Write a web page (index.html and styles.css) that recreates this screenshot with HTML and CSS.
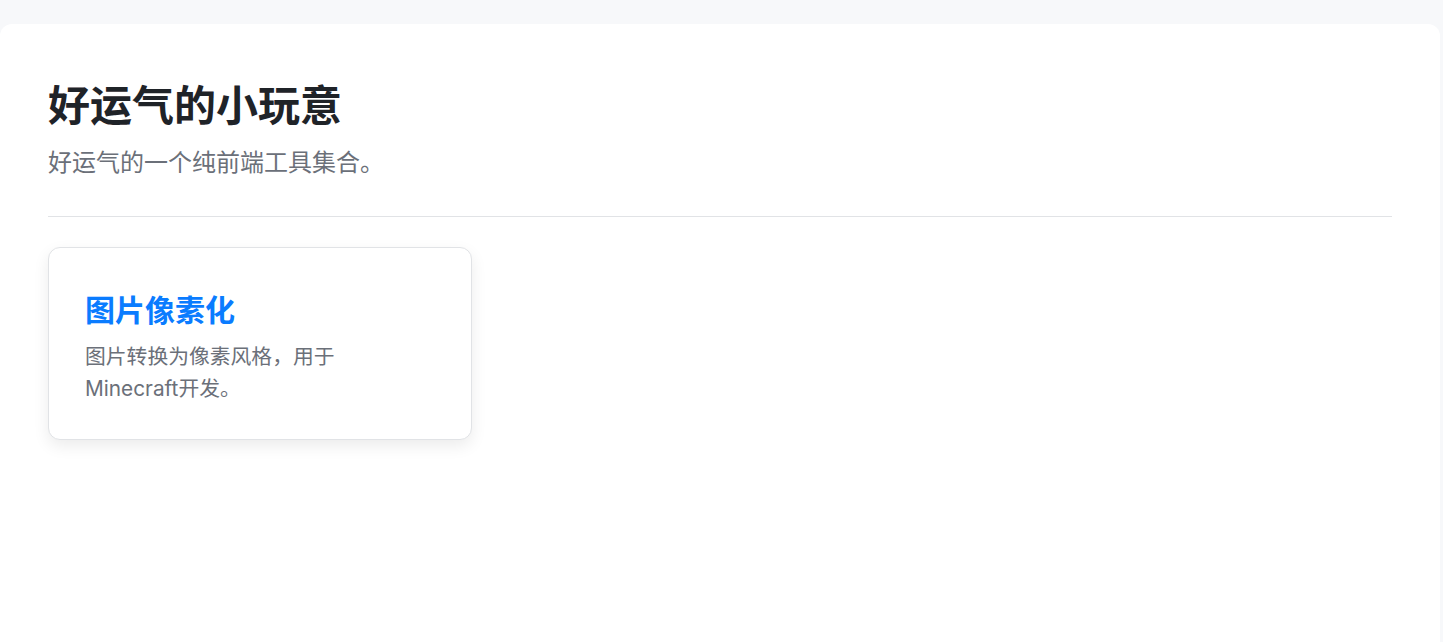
FILE: index.html
```html
<!DOCTYPE html>
<html lang="zh-CN">
<head>
<meta charset="utf-8">
<title>好运气的小玩意</title>
<link rel="stylesheet" href="styles.css">
</head>
<body>
<main class="page">
  <header class="hero">
    <h1 class="hero-title">好运气的小玩意</h1>
    <p class="hero-sub">好运气的一个纯前端工具集合。</p>
  </header>
  <section class="tools">
    <a class="tool-card" href="#">
      <h3 class="tool-title">图片像素化</h3>
      <p class="tool-desc">图片转换为像素风格，用于Minecraft开发。</p>
    </a>
  </section>
</main>
</body>
</html>
```
FILE: styles.css
```css
html, body {
  margin: 0;
  padding: 0;
}
body {
  background: #f7f8fa;
  font-family: Inter, "Noto Sans CJK SC", sans-serif;
  min-height: 642px;
}
.page {
  box-sizing: border-box;
  width: 1440px;
  min-height: 618px;
  margin-top: 24px;
  background: #ffffff;
  border-radius: 12px 12px 0 0;
  padding: 57px 48px 48px;
}
.hero {
  padding-bottom: 35px;
  border-bottom: 1px solid #e1e3e6;
}
.hero-title {
  margin: 0;
  font-size: 42px;
  line-height: 1.2;
  font-weight: 700;
  color: #1f2328;
}
.hero-sub {
  margin: 14px 0 0;
  font-size: 24px;
  line-height: 1.5;
  color: #6b7079;
}
.tools {
  display: grid;
  grid-template-columns: 424px;
  margin-top: 30px;
}
.tool-card {
  display: block;
  box-sizing: border-box;
  padding: 36px 36px 36px;
  border: 1px solid #e1e3e6;
  border-radius: 12px;
  background: #fff;
  box-shadow: 0 6px 16px rgba(0, 0, 0, 0.08);
  text-decoration: none;
  height: 193px;
}
.tool-title {
  margin: 8px 0 13px;
  font-size: 30px;
  line-height: 1.2;
  font-weight: 700;
  color: #0a7cff;
}
.tool-desc {
  margin: 0;
  max-width: 320px;
  font-size: 20.8px;
  line-height: 1.5;
  color: #6b7079;
}
```
